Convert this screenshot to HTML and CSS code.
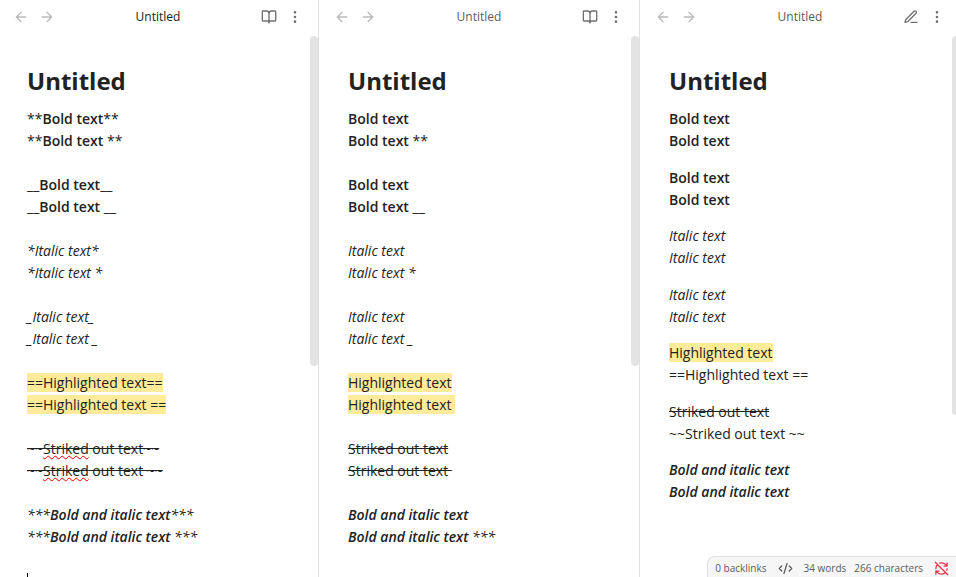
FILE: index.html
```
<!DOCTYPE html>
<html lang="en">
<head>
  <meta charset="UTF-8">
  <title>Untitled</title>
  <meta name="viewport" content="width=device-width, initial-scale=1.0">
  <link rel="stylesheet" href="styles.css">
</head>
<body>

<!-- icons shared by all panes -->
<svg class="sprite" aria-hidden="true">
  <symbol id="i-back" viewBox="0 0 24 24"><path d="m12 19-7-7 7-7M19 12H5"/></symbol>
  <symbol id="i-forward" viewBox="0 0 24 24"><path d="M5 12h14M12 5l7 7-7 7"/></symbol>
  <symbol id="i-book" viewBox="0 0 24 24"><path d="M12 7v14M3 18a1 1 0 0 1-1-1V4a1 1 0 0 1 1-1h5a4 4 0 0 1 4 4 4 4 0 0 1 4-4h5a1 1 0 0 1 1 1v13a1 1 0 0 1-1 1h-6a3 3 0 0 0-3 3 3 3 0 0 0-3-3z"/></symbol>
  <symbol id="i-edit" viewBox="0 0 24 24"><path d="M12 20h9M16.5 3.5a2.12 2.12 0 0 1 3 3L7 19l-4 1 1-4Z"/></symbol>
  <symbol id="i-more" viewBox="0 0 24 24"><circle cx="12" cy="12" r="1"/><circle cx="12" cy="5" r="1"/><circle cx="12" cy="19" r="1"/></symbol>
  <symbol id="i-code" viewBox="0 0 24 24"><path d="m18 16 4-4-4-4M6 8l-4 4 4 4M14.5 4l-5 16"/></symbol>
  <symbol id="i-sync-off" viewBox="0 0 24 24"><path d="M21 8 18.74 5.74A9.75 9.75 0 0 0 12 3C11 3 10.03 3.16 9.13 3.47M8 16H3v5M3 12C3 9.51 4 7.26 5.64 5.64M3 16l2.26 2.26A9.75 9.75 0 0 0 12 21c2.49 0 4.74-1 6.36-2.64M21 12c0 1-.16 1.97-.47 2.87M21 3v5h-5M22 22 2 2"/></symbol>
</svg>

<main class="workspace">

  <!-- source mode -->
  <section class="pane active">
    <header class="pane-header">
      <button class="icon-btn nav" aria-label="Back"><svg><use href="#i-back"/></svg></button>
      <button class="icon-btn nav" aria-label="Forward"><svg><use href="#i-forward"/></svg></button>
      <span class="pane-title">Untitled</span>
      <button class="icon-btn" aria-label="Reading view"><svg><use href="#i-book"/></svg></button>
      <button class="icon-btn" aria-label="More options"><svg><use href="#i-more"/></svg></button>
    </header>
    <div class="pane-body">
      <article class="note">
        <h1>Untitled</h1>
        <p>**<strong>Bold text</strong>**<br>**<strong>Bold text </strong>**</p>
        <p>__<strong>Bold text</strong>__<br>__<strong>Bold text </strong>__</p>
        <p><em>*Italic text*</em><br><em>*Italic text *</em></p>
        <p><em>_Italic text_</em><br><em>_Italic text _</em></p>
        <p><mark>==Highlighted text==</mark><br><mark>==Highlighted text ==</mark></p>
        <p><del>~~<span class="typo">Striked</span> out text~~</del><br><del>~~<span class="typo">Striked</span> out text ~~</del></p>
        <p><em>***<strong>Bold and italic text</strong>***</em><br><em>***<strong>Bold and italic text </strong>***</em></p>
        <p><span class="caret"></span></p>
      </article>
      <div class="scrollbar"><div class="thumb"></div></div>
    </div>
  </section>

  <!-- live preview -->
  <section class="pane">
    <header class="pane-header">
      <button class="icon-btn nav" aria-label="Back"><svg><use href="#i-back"/></svg></button>
      <button class="icon-btn nav" aria-label="Forward"><svg><use href="#i-forward"/></svg></button>
      <span class="pane-title">Untitled</span>
      <button class="icon-btn" aria-label="Reading view"><svg><use href="#i-book"/></svg></button>
      <button class="icon-btn" aria-label="More options"><svg><use href="#i-more"/></svg></button>
    </header>
    <div class="pane-body">
      <article class="note">
        <h1>Untitled</h1>
        <p><strong>Bold text</strong><br><strong>Bold text </strong>**</p>
        <p><strong>Bold text</strong><br><strong>Bold text </strong>__</p>
        <p><em>Italic text</em><br><em>Italic text *</em></p>
        <p><em>Italic text</em><br><em>Italic text _</em></p>
        <p><mark>Highlighted text</mark><br><mark>Highlighted text&nbsp;</mark></p>
        <p><del>Striked out text</del><br><del>Striked out text&nbsp;</del></p>
        <p><em><strong>Bold and italic text</strong></em><br><em><strong>Bold and italic text </strong>***</em></p>
      </article>
      <div class="scrollbar"><div class="thumb"></div></div>
    </div>
  </section>

  <!-- reading view -->
  <section class="pane reading">
    <header class="pane-header">
      <button class="icon-btn nav" aria-label="Back"><svg><use href="#i-back"/></svg></button>
      <button class="icon-btn nav" aria-label="Forward"><svg><use href="#i-forward"/></svg></button>
      <span class="pane-title">Untitled</span>
      <button class="icon-btn" aria-label="Edit"><svg><use href="#i-edit"/></svg></button>
      <button class="icon-btn" aria-label="More options"><svg><use href="#i-more"/></svg></button>
    </header>
    <div class="pane-body">
      <article class="note">
        <h1>Untitled</h1>
        <p><strong>Bold text</strong><br><strong>Bold text</strong></p>
        <p><strong>Bold text</strong><br><strong>Bold text</strong></p>
        <p><em>Italic text</em><br><em>Italic text</em></p>
        <p><em>Italic text</em><br><em>Italic text</em></p>
        <p><mark>Highlighted text</mark><br>==Highlighted text ==</p>
        <p><del>Striked out text</del><br>~~Striked out text ~~</p>
        <p><em><strong>Bold and italic text</strong></em><br><em><strong>Bold and italic text</strong></em></p>
      </article>
      <div class="scrollbar"><div class="thumb"></div></div>
    </div>
  </section>

</main>

<footer class="status-bar">
  <span class="backlinks">0 backlinks</span>
  <svg class="code"><use href="#i-code"/></svg>
  <span>34 words</span>
  <span>266 characters</span>
  <svg class="sync"><use href="#i-sync-off"/></svg>
</footer>

</body>
</html>
```
FILE: styles.css
```
:root {
  --text: #222222;
  --text-muted: #5c5c5c;
  --text-faint: #bababa;
  --border: #e0e0e0;
  --highlight: #ffeb99;
  --red: #e93147;
}

* {
  box-sizing: border-box;
}

body {
  margin: 0;
  height: 100vh;
  overflow: hidden;
  background: #fff;
  color: var(--text);
  font-family: "Open Sans", "Noto Sans", sans-serif;
  font-size: 14px;
  line-height: 22px;
}

svg {
  fill: none;
  stroke: currentColor;
  stroke-width: 2;
  stroke-linecap: round;
  stroke-linejoin: round;
}

.sprite {
  display: none;
}

/* the outer panes run slightly past the window edges */
.workspace {
  display: flex;
  height: 100%;
  margin: 0 -5px 0 -2px;
}

.pane {
  flex: 1;
  min-width: 0;
  display: flex;
  flex-direction: column;
  border-right: 1px solid var(--border);
}

.pane-header {
  display: flex;
  align-items: center;
  padding: 4px 10px 6px;
}

.pane-title {
  flex: 1;
  text-align: center;
  font-size: 12px;
  color: var(--text-muted);
}

.active .pane-title {
  color: var(--text);
}

.icon-btn {
  display: flex;
  padding: 5px;
  border: none;
  background: none;
  color: #707070;
  cursor: pointer;
}

.icon-btn svg {
  width: 16px;
  height: 16px;
}

.icon-btn.nav {
  color: var(--text-faint);
}

.pane-body {
  flex: 1;
  min-height: 0;
  display: flex;
}

.note {
  flex: 1;
  padding: 28px 20px 0 29px;
  overflow: hidden;
}

h1 {
  margin: 0 0 10px;
  font-size: 24px;
  line-height: 34px;
  font-weight: 700;
}

p {
  margin: 0 0 22px;
}

.reading p {
  margin-bottom: 14px;
}

.reading p:nth-of-type(odd) {
  margin-bottom: 15px;
}

strong {
  font-weight: 600;
}

mark {
  background: var(--highlight);
  color: inherit;
}

.typo {
  text-decoration: underline wavy #f00 1px;
}

.caret {
  display: inline-block;
  height: 18px;
  border-left: 1px solid #000;
  vertical-align: middle;
}

.scrollbar {
  width: 8px;
}

.thumb {
  height: 61%;
  border-radius: 4px;
  background: #e3e3e3;
}

.reading .thumb {
  height: 70%;
}

.status-bar {
  position: fixed;
  right: 0;
  bottom: 0;
  display: flex;
  align-items: center;
  gap: 8px;
  padding: 3px 7px 0;
  border: 1px solid var(--border);
  border-width: 1px 0 0 1px;
  border-radius: 8px 0 0 0;
  background: #f6f6f6;
  color: var(--text-muted);
  font-size: 10px;
  line-height: 17px;
}

.status-bar svg {
  width: 15px;
  height: 15px;
}

.code {
  margin: 0 3px;
}

.sync {
  margin-left: 3px;
  color: var(--red);
}
```
